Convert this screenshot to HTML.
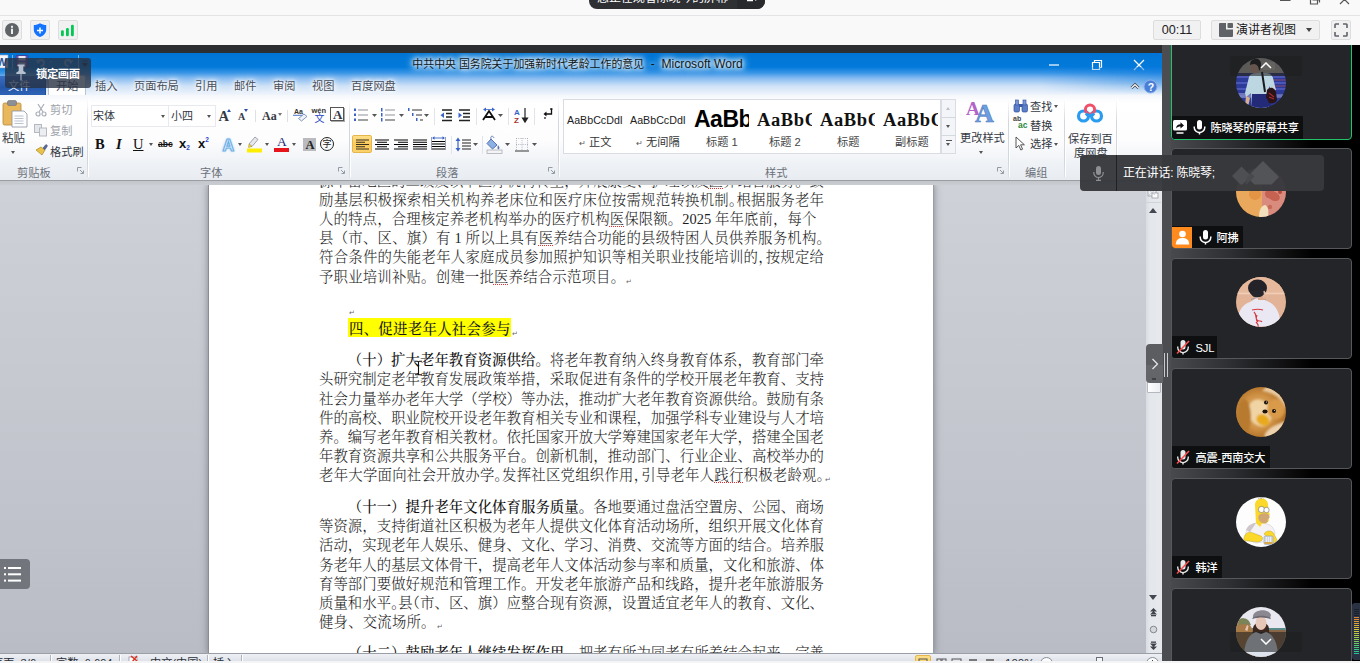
<!DOCTYPE html>
<html lang="zh-CN">
<head>
<meta charset="utf-8">
<title>会议</title>
<style>
*{box-sizing:border-box;margin:0;padding:0}
html,body{width:1360px;height:663px;overflow:hidden;background:#f9f9fa}
body{position:relative;font-family:"Liberation Sans","Noto Sans CJK SC",sans-serif;font-size:12px;color:#222}
.abs{position:absolute}
/* ---------- top meeting chrome ---------- */
#top{position:absolute;left:0;top:0;width:1360px;height:45px;background:#f9f9fa}
#top .sep{position:absolute;left:0;top:15px;width:1360px;height:1px;background:#e4e4e6}
.tbtn{position:absolute;top:20px;height:20px;background:#f1f1f2;border:1px solid #dddddf;border-radius:2px}
#pill{position:absolute;left:589px;top:-14px;width:176px;height:23px;background:#2e3034;border-radius:8px;color:#fff;font-size:12px;line-height:23px;overflow:hidden;white-space:nowrap}
#pill .t{position:absolute;left:8px;top:1px;font-size:12px;letter-spacing:-.1px}
#pill .d{position:absolute;left:148px;top:0;width:28px;height:23px;background:#28292d}
/* ---------- dark band & right panel ---------- */
#band{position:absolute;left:0;top:45px;width:1360px;height:8px;background:#2c2e31}
#right{position:absolute;left:1162px;top:45px;width:198px;height:618px;background:#000}
#gutter{position:absolute;left:0;top:0;width:9px;height:618px;background:#47494d}
.tile{position:absolute;left:9px;width:181px;height:101px;background:#232528;border:1px solid #4a4c50;border-radius:4px;overflow:hidden}
.tile .av{position:absolute;left:65px;top:18px;width:50px;height:50px;border-radius:50%;overflow:hidden}
.tile .lb{position:absolute;left:1px;bottom:0;height:22px;background:#101112;color:#fff;font-size:12px;line-height:22px;white-space:nowrap;padding:0 5px 0 24px}
/* ---------- word window ---------- */
#word{position:absolute;left:0;top:53px;width:1162px;height:610px;overflow:hidden;background:#fff}
#wtitle{position:absolute;left:0;top:0;width:1162px;height:42px;background:linear-gradient(#0074d4 0,#037adb 14px,#3a96e6 20px,#84baf0 25px,#cfe2f7 33px,#f0f5fc 42px)}
#ribbon{position:absolute;left:0;top:42px;width:1162px;height:85px;background:linear-gradient(#f4f7fb 0,#ffffff 8px,#fdfdfe 45px,#eef1f5 70px,#e8ebef 85px)}
#rshadow{position:absolute;left:0;top:127px;width:1162px;height:5px;background:linear-gradient(#8d9097 0,#a9acb3 1px,#c4c7cc 1.5px,#c9ccd1 5px)}
#docarea{position:absolute;left:0;top:132px;width:1146px;height:468px;overflow:hidden;background:linear-gradient(#ced1d7 0,#c6c9d0 40%,#bec1c9 80%,#b9bcc4 100%)}
#page{position:absolute;left:209px;top:0;width:724px;height:468px;background:#fff;box-shadow:-1px 0 0 #8a8d94,1px 0 0 #9a9da5,0 0 7px 1px rgba(80,84,94,.6)}
#vscroll{position:absolute;left:1146px;top:132px;width:16px;height:468px;background:linear-gradient(to right,#d9dce2,#e4e7eb 4px,#e6e8ec)}
#status{position:absolute;left:0;top:600px;width:1162px;height:8px;background:#d5d9e1;border-top:1px solid #a3a7af}
#bottomstrip{position:absolute;left:0;top:660px;width:1360px;height:3px;background:#f4f4f5}

#right{overflow:hidden}
#wtitle .ttl{position:absolute;left:0;top:3px;width:1155px;text-align:center;font-size:12.100px;line-height:16px;color:#101820;text-shadow:0 0 4px #fff,0 0 6px #fff,0 0 8px #e8f2ff,0 0 10px #d8e8ff}
.wc{position:absolute;top:0;color:#fff}
.tab{position:absolute;top:25px;height:17px;line-height:17px;font-size:11.2px;color:#474d59;white-space:nowrap;text-shadow:0 0 3px #fff,0 0 5px #fff,0 0 8px #fff}
#filetab{position:absolute;left:0;top:23px;width:46px;height:19px;background:linear-gradient(#3a6fc4,#2557a8 60%,#2c62b6);border-radius:0 3px 0 0;border-right:1px solid #1d4c96}
#hometab{position:absolute;left:48px;top:22px;width:38px;height:21px;background:linear-gradient(#fbfcfe,#fff);border:1px solid #b9c3d2;border-bottom:none;border-radius:3px 3px 0 0}
#pin{position:absolute;left:5px;top:58px;width:86px;height:30px;background:rgba(40,50,68,.8);border-radius:3px;color:#fff;font-size:11.3px;font-weight:bold;line-height:32px;z-index:20}
#pin span{position:absolute;left:31px;top:0;letter-spacing:-.4px}

/* ribbon */
#ribbon div,#ribbon span{position:absolute;white-space:nowrap}
.rt{font-size:11.2px;line-height:14px;color:#343943}
.rt.g{color:#9ea3ab}
.gl{font-size:11.2px;line-height:14px;color:#6b717b;top:71px}
.gdiv{top:4px;width:1px;height:78px;background:linear-gradient(rgba(190,196,205,0),#d2d6dd 30%,#d2d6dd 80%,rgba(190,196,205,.3));box-shadow:1px 0 0 #fff}
.dl{width:7px;height:7px;top:72px}
.ar{width:0;height:0;border:2.5px solid transparent;border-top:3px solid #555;border-bottom:none}
.cb{top:10px;height:22px;background:#fff;border:1px solid #e7e9ee}
.ico{overflow:visible}

/* document text */
.ln{position:absolute;height:19.15px;line-height:19.15px;margin-top:1.1px;font-family:"Liberation Serif","Noto Serif CJK SC",serif;font-size:14.4px;font-weight:300;color:#1c1c1c;white-space:nowrap;margin-left:-209px}
.ln:not(.j){letter-spacing:.19px}
.ln.j{text-align:justify;text-align-last:justify;white-space:normal}
.ln b{font-weight:500;color:#111}
.hp{display:inline-block;width:.5em;overflow:visible;white-space:nowrap}
.hpl{margin-left:-.5em}
.sq{text-decoration:underline dotted #e33030;text-decoration-thickness:1.100px;text-underline-offset:1.500px;text-decoration-skip-ink:none}
.pm{font-family:"DejaVu Sans",sans-serif;font-size:7px;color:#666;position:relative;top:2px;left:1px}
.hl{background:#ffff00;font-weight:500;letter-spacing:.3px;padding:0 0 0 1.400px;color:#161616;display:inline-block;height:18.600px;line-height:23.4px;position:relative;top:-1.3px;vertical-align:top;overflow:hidden}

#right{background:linear-gradient(to right,#4a4c50 0,#46484c 12px,#2c2e31 70px,#0c0c0d 130px,#000 150px)}
#gutter{background:#4b4d51}
.tile{left:8.500px;width:181.500px;height:101px}
.tile .av{left:64.500px;top:18px}
.tile .av svg{display:block}
.tile .lb{left:0;bottom:0;height:22.500px;padding:0;background:#0e0f10}
.lb .m{position:absolute;top:4px}
.lb .m svg{display:block}
.lb .n{position:absolute;top:0;line-height:25px;font-size:11.200px;font-weight:500;color:#fff;letter-spacing:-.15px}
.chev{position:absolute;left:58px;width:72px;height:19.500px;background:rgba(30,31,33,.58);border-radius:2px}
.chev svg{position:absolute;left:30px;top:6px}
#meter{position:absolute;left:189.500px;top:558px;width:9px;height:57px;background:#2a3142;border-radius:3px 0 0 3px}
#meter i{position:absolute;left:2.500px;top:6px;width:4.500px;height:46px;background:linear-gradient(#1b1f2a 0,#1b1f2a 16%,#e07f30 17%,#e0a030 30%,#d8c838 45%,#98cc48 65%,#40c878 85%,#20c0a0 100%);-webkit-mask-image:repeating-linear-gradient(#000 0,#000 1.300px,transparent 1.300px,transparent 2px);mask-image:repeating-linear-gradient(#000 0,#000 1.300px,transparent 1.300px,transparent 2px)}
#handle{position:absolute;left:1146px;top:344px;width:16.500px;height:39px;background:linear-gradient(#5b5d60 0,#5b5d60 54%,#646669 55%,#626467 100%);border-radius:4px 0 0 4px;z-index:15}
#grip{position:absolute;left:1163.800px;top:353px;width:4px;height:24px;border-left:1px solid #c9cbcf;border-right:1px solid #c9cbcf;z-index:15}
#speak{position:absolute;left:1080px;top:155px;width:244px;height:35.500px;background:rgba(55,57,61,.97);border-radius:4px;z-index:30;color:#fff;font-size:12px}
#speak .dv{position:absolute;left:36px;top:0;width:1px;height:35.500px;background:#202124}
#speak span{position:absolute;left:43px;top:0;line-height:36.500px;white-space:nowrap;letter-spacing:-.2px}

#status{top:599.700px;height:8.300px;overflow:hidden;background:linear-gradient(#eef0f4,#dfe3ea);border-top:1px solid #9a9ea6}
#status .st{position:absolute;top:2.200px;font-size:11.200px;line-height:14px;color:#2a2f38;white-space:nowrap}
#status .sd{position:absolute;top:1px;width:1px;height:8px;background:#b0b4bc;box-shadow:1px 0 0 #fff}
#bottomstrip{top:660.500px;height:2.500px;background:#f4f4f5;z-index:40}
#listbtn{position:absolute;left:0;top:559px;width:30px;height:30px;background:#72757b;border-radius:0 4px 4px 0;z-index:12}
#ibeam{position:absolute;left:413.500px;top:360px;z-index:12}
</style>
</head>
<body>
<div id="top">
  <div class="sep"></div>
  <div id="pill"><span class="t">您正在观看陈晓琴的屏幕</span><span class="d"></span>
    <svg class="abs" style="left:158px;top:9px" width="12" height="8" viewBox="0 0 12 8"><path d="M0 3.500h6M0 5.500h6" stroke="#fff" stroke-width="1.300"/><path d="M6.500 3l2.300 3 2.300-3z" fill="#fff"/></svg>
  </div>
  <svg class="abs" style="left:1276px;top:0" width="80" height="6" viewBox="0 0 80 6"><g stroke="#555" stroke-width="1.200" fill="none"><path d="M4 .4h10.500"/><path d="M34.500 -3v7h7v-7M36.500 0h7v2.500"/><path d="M64 -5l9 9M73 -5l-9 9"/></g></svg>
  <div class="tbtn" style="left:2px;width:20px"></div>
  <div class="tbtn" style="left:30px;width:20px"></div>
  <div class="tbtn" style="left:58px;width:20px"></div>
  <svg class="abs" style="left:2px;top:20px" width="76" height="20" viewBox="0 0 76 20">
    <circle cx="10" cy="10" r="7" fill="#5f6368"/><rect x="9" y="8.700" width="2" height="5.300" fill="#ededee"/><rect x="9" y="5.800" width="2" height="2" fill="#ededee"/>
    <path d="M38 3.200c2 1.300 4 1.700 6.200 1.800v4.500c0 4-3 6.300-6.200 7.500-3.200-1.200-6.200-3.500-6.200-7.500v-4.500c2.200-.1 4.200-.5 6.200-1.800z" fill="#1473ff"/><path d="M35 10.500h6M38 7.500v6" stroke="#fff" stroke-width="1.500"/>
    <g fill="#00c853"><rect x="59" y="10.200" width="2.800" height="6" rx="1.200"/><rect x="64" y="8" width="2.800" height="8.200" rx="1.200"/><rect x="69" y="4.800" width="2.800" height="11.400" rx="1.200"/></g>
  </svg>
  <div class="tbtn" style="left:1153px;width:48px"></div>
  <div class="abs" style="left:1153px;top:20px;width:48px;height:20px;line-height:21px;text-align:center;font-size:12.600px;color:#222">00:11</div>
  <div class="tbtn" style="left:1211px;width:109px"></div>
  <svg class="abs" style="left:1219px;top:23px" width="14" height="14" viewBox="0 0 14 14"><path d="M0 1a1 1 0 0 1 1-1h6v6.500h7v6.500a1 1 0 0 1-1 1h-12a1 1 0 0 1-1-1z" fill="#5f6368"/><rect x="8.500" y="0" width="5.500" height="5" rx=".8" fill="#5f6368"/></svg>
  <div class="abs" style="left:1236px;top:20px;height:20px;line-height:20px;font-size:12px;color:#1c1c1c;white-space:nowrap">演讲者视图</div>
  <div class="abs" style="left:1305.500px;top:28px;width:0;height:0;border:3.500px solid transparent;border-top:4.500px solid #444;border-bottom:none"></div>
  <div class="tbtn" style="left:1331px;width:20px"></div>
  <svg class="abs" style="left:1334px;top:23px" width="14" height="14" viewBox="0 0 14 14"><path d="M1 5v-3.200a.8 .8 0 0 1 .8-.8h3.200M9 1h3.200a.8 .8 0 0 1 .8 .8v3.200M13 9v3.200a.8 .8 0 0 1-.8 .8h-3.200M5 13h-3.200a.8 .8 0 0 1-.8-.8v-3.200" stroke="#5f6368" stroke-width="1.600" fill="none"/></svg>
</div>
<div id="band"></div>
<div id="pin"><svg class="abs" style="left:10px;top:5px" width="12" height="20" viewBox="0 0 12 20"><path d="M2.500 1.500h7v1.800h-1.200v4.700l2.400 1.600v1.400h-9.400v-1.400l2.400-1.600v-4.700h-1.200z" fill="#b4bfd0"/><path d="M6 11v6.500" stroke="#a4b0c2" stroke-width="1.100"/></svg><span>锁定画面</span></div>

<div id="word">
  <div id="wtitle">
    <svg class="abs" style="left:0;top:1px" width="92" height="18" viewBox="0 0 92 18">
      <rect x="-2" y="1" width="10" height="13" fill="#f4f6fa" stroke="#8aa0c8" stroke-width=".6"/><text x="-3.500" y="11.500" font-family="Liberation Sans,sans-serif" font-weight="bold" font-size="11" fill="#2a5699">W</text>
      <path d="M12.500 1v14" stroke="#9cc0ec" stroke-width=".8"/>
      <rect x="16" y="1.500" width="12" height="12" rx="1" fill="#6a58b8" stroke="#3f3486" stroke-width=".7"/><rect x="18.500" y="2" width="7" height="4.500" fill="#e8e8f4"/><rect x="18.500" y="8.500" width="7" height="5" fill="#cfd0e4"/>
      <path d="M38 9c0-4 6-4 6 0 0 2-2 3-3.500 3.500" stroke="#7aa4dc" stroke-width="1.800" fill="none"/><path d="M35.500 6l2.500 4 2.500-3z" fill="#7aa4dc"/>
      <path d="M50 8h2" stroke="#7aa4dc" stroke-width="1"/>
      <path d="M71 9c0-4-6-4-6 0 0 2 2 3 3.500 3.500" stroke="#7aa4dc" stroke-width="1.800" fill="none"/><path d="M73.500 6l-2.500 4-2.500-3z" fill="#7aa4dc"/>
      <path d="M78.500 1v14" stroke="#9cc0ec" stroke-width=".8"/>
      <path d="M82.500 7h5M82.500 9.500h5l-2.500 3z" stroke="#223" stroke-width=".9" fill="#223"/>
    </svg>
    <div class="ttl"><span style="font-size:10.900px">中共中央 国务院关于加强新时代老龄工作的意见</span>&nbsp; - &nbsp;Microsoft Word</div>
    <svg class="wc" style="left:1040px;top:2px" width="116" height="20" viewBox="0 0 116 20"><g stroke="#fff" stroke-width="1.2" fill="none"><path d="M9 10h10"/><path d="M52.5 7.5h7v7h-7zM54.5 7.5v-2h7v7h-2"/><path d="M94 5l10 10M104 5l-10 10"/></g></svg>
    <div class="abs" style="left:1040px;top:14px;width:122px;height:28px;background:linear-gradient(to right,rgba(10,120,220,0),rgba(10,120,220,.5) 80%,rgba(10,120,220,.6));-webkit-mask-image:linear-gradient(#000,rgba(0,0,0,.6) 60%,transparent);mask-image:linear-gradient(#000,rgba(0,0,0,.6) 60%,transparent)"></div>
    <svg class="abs" style="left:1128px;top:26px" width="32" height="15" viewBox="0 0 32 15"><path d="M3.500 9l3.500-3.500 3.500 3.500" stroke="#3a3f48" stroke-width="2.600" fill="none"/><path d="M3.500 9l3.500-3.500 3.500 3.500" stroke="#fff" stroke-width="1.200" fill="none"/><circle cx="22.500" cy="7.500" r="6.500" fill="#4a7fd8" stroke="#8ab0ec" stroke-width="1"/><text x="19.700" y="11.500" font-family="Liberation Sans,sans-serif" font-weight="bold" font-size="10.500" fill="#fff">?</text></svg>
    <div id="filetab"></div><div id="hometab"></div>
    <div class="tab" style="left:8px;color:#fff;text-shadow:none">文件</div>
    <div class="tab" style="left:56px">开始</div>
    <div class="tab" style="left:95px">插入</div>
    <div class="tab" style="left:134px">页面布局</div>
    <div class="tab" style="left:195px">引用</div>
    <div class="tab" style="left:234px">邮件</div>
    <div class="tab" style="left:273px">审阅</div>
    <div class="tab" style="left:312px">视图</div>
    <div class="tab" style="left:351px">百度网盘</div>
  </div>
  <div id="ribbon">
    <!-- clipboard -->
    <svg class="ico abs" style="left:2px;top:4px" width="27" height="30" viewBox="0 0 27 30"><rect x="1" y="4" width="18" height="22" rx="1.5" fill="#e9b85c" stroke="#b8893a" stroke-width=".8"/><rect x="5.5" y="1.5" width="9" height="5" rx="1.5" fill="#8c8f96" stroke="#6d7077" stroke-width=".6"/><path d="M10 12h12l3 3v13h-15z" fill="#fdfdfe" stroke="#8a93a3" stroke-width=".8"/><path d="M12.5 17h9M12.5 19.5h9M12.5 22h9M12.5 24.500h9" stroke="#a9b4c6" stroke-width=".8"/></svg>
    <div class="rt" style="left:2px;top:36px;font-size:11.5px">粘贴</div>
    <div class="ar" style="left:11px;top:56px"></div>
    <svg class="ico abs" style="left:35px;top:8px" width="12" height="14" viewBox="0 0 12 14"><path d="M3 1l5 8M9 1l-5 8" stroke="#a9aeb6" stroke-width="1.2" fill="none"/><circle cx="3" cy="11" r="2" fill="none" stroke="#a9aeb6" stroke-width="1.2"/><circle cx="9" cy="11" r="2" fill="none" stroke="#a9aeb6" stroke-width="1.2"/></svg>
    <div class="rt g" style="left:50px;top:8px">剪切</div>
    <svg class="ico abs" style="left:34px;top:29px" width="14" height="13" viewBox="0 0 14 13"><rect x=".5" y=".5" width="7" height="8" fill="#e4e6ea" stroke="#b4b8c0"/><rect x="5.500" y="4" width="7" height="8" fill="#eceef1" stroke="#b4b8c0"/></svg>
    <div class="rt g" style="left:50px;top:29px">复制</div>
    <svg class="ico abs" style="left:35px;top:49px" width="14" height="13" viewBox="0 0 14 13"><path d="M1 6l6 5 3-5-4-3z" fill="#e9c24a" stroke="#a88a2a" stroke-width=".7"/><path d="M8 4l3-3.500 1.500 1.200-2.500 4z" fill="#5a6a9a" stroke="#3d4a78" stroke-width=".6"/></svg>
    <div class="rt" style="left:50px;top:50px">格式刷</div>
    <div class="gl" style="left:17px">剪贴板</div>
    <svg class="dl abs" style="left:77px" viewBox="0 0 7 7"><path d="M.5 4.500v-4h4M3 3l3 3M6.500 3.500v3h-3" stroke="#8b919b" fill="none" stroke-width=".9"/></svg>
    <div class="gdiv" style="left:87px"></div>
    <!-- font -->
    <div class="cb" style="left:91px;width:78px"></div>
    <div class="cb" style="left:168px;width:48px"></div>
    <div class="rt" style="left:93px;top:14px;font-size:11px">宋体</div>
    <div class="ar" style="left:161px;top:20px"></div>
    <div class="rt" style="left:171px;top:14px;font-size:11px">小四</div>
    <div class="ar" style="left:207px;top:20px"></div>
    <div class="rt" style="left:218.500px;top:12px;font:bold 14.500px/18px 'Liberation Serif',serif">A</div>
    <div class="ar" style="left:227px;top:14px;border-top:none;border-bottom:3px solid #2b4fa8"></div>
    <div class="rt" style="left:238px;top:14px;font:bold 10px/15px 'Liberation Serif',serif">A</div>
    <div class="ar" style="left:244px;top:14px;border-top-color:#2b4fa8"></div>
    <div class="abs" style="left:255px;top:15px;width:1px;height:12px;background:#dde0e6"></div>
    <div class="rt" style="left:262px;top:11.500px;font:bold 12px/18px 'Liberation Serif',serif">Aa</div>
    <div class="ar" style="left:278px;top:18px;border-top-color:#777"></div>
    <div class="abs" style="left:287px;top:15px;width:1px;height:12px;background:#dde0e6"></div>
    <svg class="ico abs" style="left:292px;top:12px" width="17" height="17" viewBox="0 0 17 17"><text x="2" y="6.500" font-family="Liberation Sans,sans-serif" font-size="7" font-weight="bold" fill="#333">Aa</text><path d="M1 8.300h10" stroke="#3a62c8" stroke-width=".9"/><path d="M6.500 11.500l5.500-4.500 3 2.500-5.500 4.500z" fill="#eef2fa" stroke="#7c8cb0" stroke-width=".9"/></svg>
    <div class="rt" style="left:311.500px;top:11px;font:bold 7.500px/9px 'Liberation Sans',sans-serif;color:#333">wén</div>
    <div class="rt" style="left:314.500px;top:16.500px;font-size:10px;line-height:14px;color:#2a48c8">文</div>
    <div class="abs" style="left:330px;top:12px;width:14px;height:13.500px;border:1px solid #555;background:#fff;box-shadow:1px 1px 0 #aaa"></div>
    <div class="rt" style="left:333px;top:10.500px;font:bold 13px/17px 'Liberation Serif',serif">A</div>
    <!-- row 2 -->
    <div class="rt" style="left:95px;top:40px;font:bold 14.5px/18px 'Liberation Serif',serif;color:#111">B</div>
    <div class="rt" style="left:116px;top:40px;font:italic bold 14.5px/18px 'Liberation Serif',serif;color:#111">I</div>
    <div class="rt" style="left:133px;top:40px;font:14.5px/18px 'Liberation Serif',serif;color:#111;text-decoration:underline">U</div>
    <div class="ar" style="left:149px;top:48px"></div>
    <div class="rt" style="left:158px;top:42px;font:bold 8.500px/14px 'Liberation Sans',sans-serif;color:#111;text-decoration:line-through">abc</div>
    <div class="rt" style="left:179px;top:41px;font:bold 13px/16px 'Liberation Sans',sans-serif;color:#111">x<span style="position:relative;top:2px;font-size:6.500px;color:#2a48c8;line-height:1px">2</span></div>
    <div class="rt" style="left:198px;top:41px;font:bold 13px/16px 'Liberation Sans',sans-serif;color:#111">x<span style="position:relative;top:-6px;font-size:6.500px;color:#2a48c8;line-height:1px">2</span></div>
    
    <div class="rt" style="left:222.500px;top:40px;font:bold 16px/22px 'Liberation Sans',sans-serif;color:#eaf4ff;-webkit-text-stroke:1.2px #6fb0e6;text-shadow:0 0 3px #8cc4f0">A</div>
    <div class="ar" style="left:238px;top:48px"></div>
    <svg class="ico abs" style="left:246px;top:41px" width="17" height="17" viewBox="0 0 17 17"><path d="M3 8l6-7 3 2.500-6 7z" fill="#e6e8ec" stroke="#8a8f9a" stroke-width=".8"/><path d="M3 8l3 2.500-3.500 1z" fill="#f2d24a" stroke="#a8902a" stroke-width=".5"/><rect x="1" y="12.500" width="15" height="4" fill="#ffee00"/></svg>
    <div class="ar" style="left:265px;top:48px"></div>
    <div class="rt" style="left:277px;top:38.300px;font:13.500px/17px 'Liberation Serif',serif;color:#1a2a78">A</div>
    <div class="abs" style="left:274px;top:53px;width:15px;height:4px;background:#e8141c"></div>
    <div class="ar" style="left:292px;top:48px"></div>
    <div class="abs" style="left:303px;top:43px;width:13px;height:13px;background:#b9bbbf"></div>
    <div class="rt" style="left:305.500px;top:42px;font:bold 12.500px/16px 'Liberation Serif',serif;color:#222">A</div>
    <div class="abs" style="left:320px;top:42px;width:14px;height:14px;border:1.2px solid #222;border-radius:50%"></div>
    <div class="rt" style="left:322.500px;top:43px;font-size:9px;line-height:12px;color:#222">字</div>
    <div class="gl" style="left:200px">字体</div>
    <svg class="dl abs" style="left:338px" viewBox="0 0 7 7"><path d="M.5 4.500v-4h4M3 3l3 3M6.500 3.500v3h-3" stroke="#8b919b" fill="none" stroke-width=".9"/></svg>
    <div class="gdiv" style="left:349px"></div>
    <!-- paragraph row1 -->
    <svg class="ico abs" style="left:354px;top:12px" width="200" height="20" viewBox="0 0 200 20">
      <g fill="#3a62c8"><rect x="0" y="1.500" width="2" height="2.500"/><rect x="0" y="6.500" width="2" height="2.500"/><rect x="0" y="11.500" width="2" height="2.500"/></g>
      <g stroke="#8d9199" stroke-width="1"><path d="M4 3h10M4 8h10"/></g><path d="M4 13h10" stroke="#444" stroke-width="1"/>
      <path d="M18 7h5l-2.500 3z" fill="#555"/>
      <g fill="#3a62c8"><rect x="27" y="1" width="1.500" height="3.500"/><rect x="27" y="6" width="1.500" height="3.500"/><rect x="27" y="11" width="1.500" height="3.500"/></g>
      <g stroke="#8d9199" stroke-width="1"><path d="M31 3h10M31 8h10"/></g><path d="M31 13h10" stroke="#444" stroke-width="1"/>
      <path d="M45 7h5l-2.500 3z" fill="#555"/>
      <g fill="#3a62c8"><rect x="54" y="1" width="1.500" height="3"/><rect x="58" y="6" width="1.500" height="3"/><rect x="62" y="11" width="1.500" height="3"/></g>
      <g stroke="#333" stroke-width="1"><path d="M58 3h10M62 8h6M66 13h3"/></g>
      <path d="M70 7h5l-2.500 3z" fill="#555"/>
      <path d="M80.500 1v17" stroke="#e1e4ea"/>
      <g stroke="#222" stroke-width="1.300"><path d="M88 3h10M92 6.500h6M92 10h6M88 13.500h10"/></g><path d="M86.500 8.200l3.500-2.700v5.400z" fill="#3a62c8"/>
      <g stroke="#222" stroke-width="1.300"><path d="M105 3h11M109 6.500h7M109 10h7M105 13.500h11"/></g><path d="M108 8.200l-3.500-2.700v5.400z" fill="#3a62c8"/>
      <path d="M122.500 1v17" stroke="#e1e4ea"/>
      <path d="M129 13l6-9 6 9M131.500 10h7" stroke="#111" stroke-width="1.800" fill="none"/><path d="M129 2.500l3-2v4zM141 2.500l-3-2v4z" fill="#3a62c8"/><path d="M132 2.500h6" stroke="#3a62c8" stroke-width=".8"/>
      <path d="M144 7h5l-2.500 3z" fill="#555"/>
      <path d="M154.500 1v17" stroke="#e1e4ea"/>
      <text x="160" y="7.500" font-family="Liberation Sans,sans-serif" font-weight="bold" font-size="8" fill="#3a62c8">A</text>
      <text x="160" y="15.500" font-family="Liberation Sans,sans-serif" font-weight="bold" font-size="8" fill="#a83232">Z</text>
      <path d="M171 1v12M168.500 11l2.500 4 2.500-4z" stroke="#222" stroke-width="1.200" fill="#222"/>
      <path d="M180.500 1v17" stroke="#e1e4ea"/>
      <path d="M197.500 1.500v5.500h-6.500" stroke="#111" stroke-width="1.300" fill="none"/><path d="M192.500 4.500l-3 2.500 3 2.500z" fill="#111"/><path d="M198.500 2h-2.500" stroke="#111" stroke-width="1.200"/><path d="M191 10v2" stroke="#111" stroke-width="1.200"/>
    </svg>
    <!-- paragraph row2 -->
    <div class="abs" style="left:352px;top:39.500px;width:19.500px;height:18.500px;border:1px solid #e5b64c;border-radius:2px;background:linear-gradient(#fde08a,#fbc95a 50%,#fbd26c)"></div>
    <svg class="ico abs" style="left:354px;top:41px" width="190" height="18" viewBox="0 0 190 18">
      <g stroke="#000" stroke-width="1.150"><path d="M2 4h13M2 6.250h9M2 8.500h13M2 10.750h9M2 13h13" stroke="#3a3020"/>
      <path d="M21 4h14M23 6.250h10M21 8.500h14M23 10.750h10M21 13h14"/>
      <path d="M40 4h14M44 6.250h10M40 8.500h14M44 10.750h10M40 13h14"/>
      <path d="M59 4h14M59 6.250h14M59 8.500h14M59 10.750h14M59 13h14"/>
      <path d="M78 5.500h13M78 8h13M78 10.500h13M78 13h13"/></g>
      <path d="M77.500 1v13M91.500 1v13" stroke="#8a94a8" stroke-width=".9"/><path d="M79 2h11" stroke="#3a62c8" stroke-width=".9"/><path d="M78 2l2.500-1.700v3.400zM91 2l-2.500-1.700v3.400z" fill="#3a62c8"/>
      <path d="M97.500 0v18" stroke="#e1e4ea"/>
      <path d="M104 4v9" stroke="#3a62c8" stroke-width="1.200"/><path d="M104 1.500l-2.500 3.500h5zM104 15.500l-2.500-3.500h5z" fill="#3a62c8"/>
      <g stroke="#222" stroke-width="1.100"><path d="M108 4h9M108 7h9M108 10h9M108 13h9"/></g>
      <path d="M119 7h5l-2.500 3z" fill="#555"/>
      <path d="M128.500 0v18" stroke="#e1e4ea"/>
      <path d="M137 3l6 6-4.500 4-5.500-5.500z" fill="#8ab0e4" stroke="#4868a8" stroke-width=".9"/><path d="M137 3c-1-3 2-4 3-1" stroke="#5878b0" fill="none" stroke-width=".9"/><path d="M144 9c1.500 2 2 3.500 .8 4.200-1 .5-2-.5-.8-4.200z" fill="#5878b0"/>
      <rect x="133" y="14" width="15" height="3.500" fill="#f4f4f6" stroke="#a0a4ac" stroke-width=".7"/>
      <path d="M151 7h5l-2.500 3z" fill="#555"/>
      <g stroke="#a0a6b0" stroke-width=".8" stroke-dasharray="1 1.200"><path d="M162 2.500h12M162 8.500h12M162.500 2v12M168 2v12M173.500 2v12"/></g><path d="M161 15h14" stroke="#555" stroke-width="1.200"/>
      <path d="M178 7h5l-2.500 3z" fill="#555"/>
    </svg>
    <div class="gl" style="left:436px">段落</div>
    <svg class="dl abs" style="left:548px" viewBox="0 0 7 7"><path d="M.5 4.500v-4h4M3 3l3 3M6.500 3.500v3h-3" stroke="#8b919b" fill="none" stroke-width=".9"/></svg>
    <div class="gdiv" style="left:558px"></div>
    <!-- styles -->
    <div class="abs" style="left:563px;top:4px;width:378px;height:55px;background:#fff;border:1px solid #d9dce2"></div>
    <div class="rt" style="left:567px;top:17.800px;font-size:10.700px;color:#222">AaBbCcDdI</div>
    <div class="rt" style="left:579px;top:40px;color:#333"><span style="position:static;font-size:8px;color:#555">↵</span> 正文</div>
    <div class="rt" style="left:630px;top:17.800px;font-size:10.700px;color:#222">AaBbCcDdI</div>
    <div class="rt" style="left:636px;top:40px;color:#333"><span style="position:static;font-size:8px;color:#555">↵</span> 无间隔</div>
    <div class="rt" style="left:694px;top:9.500px;font:bold 23px/28px 'Liberation Sans',sans-serif;color:#000;width:55px;overflow:hidden;letter-spacing:-.5px">AaBb</div>
    <div class="rt" style="left:706px;top:40px;color:#444">标题 1</div>
    <div class="rt" style="left:757px;top:13px;font:bold 18.500px/24px 'Liberation Serif',serif;color:#111;width:55px;overflow:hidden;letter-spacing:.6px">AaBbC</div>
    <div class="rt" style="left:769px;top:40px;color:#444">标题 2</div>
    <div class="rt" style="left:820px;top:13px;font:bold 18.500px/24px 'Liberation Serif',serif;color:#111;width:55px;overflow:hidden;letter-spacing:.6px">AaBbC</div>
    <div class="rt" style="left:837px;top:40px;color:#444">标题</div>
    <div class="rt" style="left:883px;top:13px;font:bold 18.500px/24px 'Liberation Serif',serif;color:#111;width:55px;overflow:hidden;letter-spacing:.6px">AaBbC</div>
    <div class="rt" style="left:895px;top:40px;color:#444">副标题</div>
    <div class="abs" style="left:941px;top:4px;width:15px;height:55px;background:#f3f5f8;border:1px solid #d9dce2"></div>
    <div class="abs" style="left:941px;top:22px;width:15px;height:1px;background:#d4d8df"></div>
    <div class="abs" style="left:941px;top:40px;width:15px;height:1px;background:#d4d8df"></div>
    <div class="ar" style="left:946px;top:12px;border-top:none;border-bottom:3px solid #b9bec8"></div>
    <div class="ar" style="left:946px;top:30px"></div>
    <div class="abs" style="left:945.500px;top:45px;width:6px;height:1px;background:#555"></div>
    <div class="ar" style="left:946px;top:48px"></div>
    <div class="rt" style="left:966px;top:3px;font:bold 19px/22px 'Liberation Serif',serif;color:#b264c8">A</div>
    <div class="rt" style="left:975px;top:5px;font:bold 26px/28px 'Liberation Serif',serif;color:#6f9fe0;-webkit-text-stroke:.6px #4a78c0">A</div>
    <div class="rt" style="left:960px;top:36.400px">更改样式</div>
    <div class="ar" style="left:979px;top:56px"></div>
    <div class="gl" style="left:765px">样式</div>
    <svg class="dl abs" style="left:997px" viewBox="0 0 7 7"><path d="M.5 4.500v-4h4M3 3l3 3M6.500 3.500v3h-3" stroke="#8b919b" fill="none" stroke-width=".9"/></svg>
    <div class="gdiv" style="left:1008px"></div>
    <!-- editing -->
    <svg class="ico abs" style="left:1013px;top:4px" width="16" height="14" viewBox="0 0 16 14"><rect x="1" y="5" width="5.500" height="8" rx="1.500" fill="#5a7ec8" stroke="#2f4f98" stroke-width=".7"/><rect x="9" y="5" width="5.500" height="8" rx="1.500" fill="#5a7ec8" stroke="#2f4f98" stroke-width=".7"/><rect x="2.500" y="1" width="3" height="5" fill="#7a98d8" stroke="#2f4f98" stroke-width=".6"/><rect x="10" y="1" width="3" height="5" fill="#7a98d8" stroke="#2f4f98" stroke-width=".6"/><rect x="6" y="5" width="3.500" height="3" fill="#3a5aa8"/></svg>
    <div class="rt" style="left:1030px;top:5px">查找</div>
    <div class="ar" style="left:1054px;top:10px"></div>
    <div class="rt" style="left:1013px;top:20px;font:bold 7px/8px 'Liberation Sans',sans-serif;color:#444">ab</div>
    <div class="rt" style="left:1018px;top:26px;font:bold 8.500px/9px 'Liberation Sans',sans-serif;color:#2c8a3c">ac</div>
    <div class="rt" style="left:1030px;top:23.700px">替换</div>
    <svg class="ico abs" style="left:1015px;top:41px" width="10" height="15" viewBox="0 0 10 15"><path d="M1 1v11l2.800-2.600 2 4.600 1.800-.8-2-4.400h3.800z" fill="#fff" stroke="#444" stroke-width=".9"/></svg>
    <div class="rt" style="left:1030px;top:42px">选择</div>
    <div class="ar" style="left:1054px;top:48px"></div>
    <div class="gl" style="left:1025px">编组</div>
    <div class="gdiv" style="left:1064px"></div>
    <!-- baidu -->
    <svg class="ico abs" style="left:1076px;top:6px" width="28" height="24" viewBox="0 0 28 24"><circle cx="7.500" cy="15" r="5" fill="none" stroke="#2a9cf0" stroke-width="3.200"/><circle cx="20.500" cy="15" r="5" fill="none" stroke="#2a9cf0" stroke-width="3.200"/><circle cx="14" cy="8.500" r="4.600" fill="none" stroke="#f0506a" stroke-width="3"/><path d="M10 12.500a5 5 0 0 0 8 0" stroke="#2a9cf0" stroke-width="3.200" fill="none"/></svg>
    <div class="rt" style="left:1068px;top:36.700px">保存到百</div>
    <div class="rt" style="left:1074px;top:51px">度网盘</div>
    <div class="gdiv" style="left:1116px"></div>
</div>
  <div id="rshadow"></div>
  <div id="docarea">
    <div id="page">
<!--DOC-->
      <div class="ln j" style="left:319px;top:-14.22px;width:505px">源丰富地区的二级及以下医疗机构转型，开展康复、护理以及<span class="sq">医</span>养结合服务。鼓</div>
      <div class="ln j" style="left:319px;top:4.93px;width:505px">励基层积极探索相关机构养老床位和医疗床位按需规范转换机制<span class="hp">。</span>根据服务老年</div>
      <div class="ln j" style="left:319px;top:24.08px;width:497.5px">人的特点，合理核定养老机构举办的医疗机构<span class="sq">医</span>保限额。2025 年年底前，每个</div>
      <div class="ln j" style="left:319px;top:43.23px;width:512px">县（市、区、旗）有 1 所以上具有<span class="sq">医</span>养结合功能的县级特困人员供养服务机构。</div>
      <div class="ln j" style="left:319px;top:62.38px;width:505px">符合条件的失能老年人家庭成员参加照护知识等相关职业技能培训的<span class="hp">，</span>按规定给</div>
      <div class="ln" style="left:319px;top:81.53px;width:505px">予职业培训补贴。创建一批<span class="sq">医</span>养结合示范项目。<span class="pm">↵</span></div>
      <div class="ln" style="left:347.8px;top:112.93px"><span class="pm">↵</span></div>
      <div class="ln" style="left:347.6px;top:133.43px"><span class="hl">四、促进老年人社会参与</span><span class="pm">↵</span></div>
      <div class="ln j" style="left:347.8px;top:165.23px;width:476.2px"><b>（十）扩大老年教育资源供给。</b>将老年教育纳入终身教育体系，教育部门牵</div>
      <div class="ln j" style="left:319px;top:184.38px;width:505px">头研究制定老年教育发展政策举措，采取促进有条件的学校开展老年教育、支持</div>
      <div class="ln j" style="left:319px;top:203.53px;width:505px">社会力量举办老年大学（学校）等办法，推动扩大老年教育资源供给。鼓励有条</div>
      <div class="ln j" style="left:319px;top:222.68px;width:505px">件的高校、职业院校开设老年教育相关专业和课程，加强学科专业建设与人才培</div>
      <div class="ln j" style="left:319px;top:241.82px;width:505px">养。编写老年教育相关教材。依托国家开放大学筹建国家老年大学，搭建全国老</div>
      <div class="ln j" style="left:319px;top:260.98px;width:505px">年教育资源共享和公共服务平台。创新机制，推动部门、行业企业、高校举办的</div>
      <div class="ln j" style="left:319px;top:280.12px;width:511px">老年大学面向社会开放办学<span class="hp">。</span>发挥社区党组织作用<span class="hp">，</span>引导老年人<span class="sq">践行</span>积极老龄观<span class="hp">。</span><span class="pm">↵</span></div>
      <div class="ln j" style="left:347.8px;top:312.03px;width:476.2px"><b>（十一）提升老年文化体育服务质量。</b>各地要通过盘活空置房、公园、商场</div>
      <div class="ln j" style="left:319px;top:331.17px;width:505px">等资源，支持街道社区积极为老年人提供文化体育活动场所，组织开展文化体育</div>
      <div class="ln j" style="left:319px;top:350.32px;width:505px">活动，实现老年人娱乐、健身、文化、学习、消费、交流等方面的结合。培养服</div>
      <div class="ln j" style="left:319px;top:369.48px;width:505px">务老年人的基层文体骨干，提高老年人文体活动参与率和质量，文化和旅游、体</div>
      <div class="ln j" style="left:319px;top:388.62px;width:505px">育等部门要做好规范和管理工作。开发老年旅游产品和线路，提升老年旅游服务</div>
      <div class="ln j" style="left:319px;top:407.77px;width:505px">质量和水平<span class="hp">。</span>县<span class="hpl">（</span>市、区、旗）应整合现有资源，设置适宜老年人的教育、文化、</div>
      <div class="ln" style="left:319px;top:426.92px;width:505px">健身、交流场所。<span class="pm">↵</span></div>
      <div class="ln j" style="left:347.8px;top:458.02px;width:476.2px"><b>（十二）鼓励老年人继续发挥作用。</b>把老有所为同老有所养结合起来，完善</div>
<!--/DOC-->
    </div>
  </div>
  <div id="vscroll">
    <svg class="abs" style="left:1px;top:2px" width="13" height="13" viewBox="0 0 13 13"><rect x="1" y="2" width="8" height="7" fill="#f2f3f5" stroke="#9a9ea6" stroke-width=".8"/><rect x="5" y="6" width="6" height="5" fill="#fbfbfc" stroke="#9a9ea6" stroke-width=".8"/><path d="M2 3l6 5M8 3l-6 5" stroke="#b0b4bb" stroke-width=".6"/></svg>
    <div class="abs" style="left:0;top:17px;width:15px;height:1px;background:#d0d3d9"></div>
    <div class="abs" style="left:3px;top:23px;width:0;height:0;border:4.500px solid transparent;border-bottom:5px solid #454850;border-top:none"></div>
    <div class="abs" style="left:1px;top:173px;width:14px;height:34.500px;background:linear-gradient(to right,#fff,#eceef2);border:1px solid #b4b8c0;border-radius:1px"></div>
    <div class="abs" style="left:3px;top:410px;width:0;height:0;border:4.500px solid transparent;border-top:5px solid #454850;border-bottom:none"></div>
    <svg class="abs" style="left:3px;top:422.500px" width="9" height="42" viewBox="0 0 9 42"><g fill="#3f424a"><path d="M4.500 0l3.500 3.500h-7zM4.500 3l3.500 3.500h-7z"/><rect x="2" y="7" width="5" height="1.300"/><path d="M4.500 42l3.500-3.500h-7zM4.500 39l3.500-3.500h-7z"/><rect x="2" y="33.500" width="5" height="1.300"/></g><circle cx="4.500" cy="21.500" r="3.300" fill="#d5d7dc" stroke="#7b7f87" stroke-width=".9"/></svg>
  </div>
  <div id="status">
    <div class="st" style="left:-8px">页面: 3/6</div><div class="sd" style="left:50px"></div>
    <div class="st" style="left:56px">字数: 6,694</div><div class="sd" style="left:119px"></div>
    <svg class="abs" style="left:128px;top:1px" width="12" height="10" viewBox="0 0 12 10"><rect x="1" y="2" width="8" height="8" fill="#fff" stroke="#889" stroke-width=".7"/><path d="M3 1l6 5M9 1l-5 6" stroke="#e03020" stroke-width="1.400"/></svg>
    <div class="st" style="left:150px">中文(中国)</div><div class="sd" style="left:207px"></div>
    <div class="st" style="left:213px">插入</div><div class="sd" style="left:241px"></div>
    <div class="abs" style="left:915px;top:1px;width:16px;height:12px;background:linear-gradient(#fde08a,#fbc95a);border:1px solid #e5b64c;border-radius:2px"></div>
    <svg class="abs" style="left:915px;top:3px" width="82" height="8" viewBox="0 0 82 8"><g fill="none" stroke="#555" stroke-width="1"><rect x="4" y="2" width="8" height="8"/><rect x="22" y="2" width="4" height="8"/><rect x="27" y="2" width="4" height="8"/><rect x="37" y="2" width="9" height="8"/><path d="M54 3h8M54 6h8M71 3h8M71 6h8" stroke-width="1.300"/></g></svg>
    <div class="st" style="left:1005px;font-size:11.500px">100%</div>
    <div class="abs" style="left:1040px;top:3px;width:13px;height:13px;border-radius:50%;background:#fbfcfd;border:1px solid #8a8e96"></div>
    <div class="abs" style="left:1054px;top:8px;width:92px;height:1px;background:#8a8e96"></div>
    <div class="abs" style="left:1096px;top:3px;width:7px;height:10px;background:#f4f5f7;border:1px solid #6a6e76"></div>
    <div class="abs" style="left:1146px;top:3px;width:13px;height:13px;border-radius:50%;background:#fbfcfd;border:1px solid #8a8e96"></div>
    <div class="abs" style="left:1152px;top:6px;width:1px;height:3px;background:#444"></div>
  </div>
</div>

<div id="right">
  <div id="gutter"></div>
  <div class="tile" style="top:-6.5px;border-color:#1fc46b"><div class="av"><svg width="50" height="50" viewBox="0 0 50 50"><rect width="50" height="50" fill="#2c3a9a"/><rect width="50" height="15" fill="#b4ada0"/><rect x="27" y="4" width="12" height="8" fill="#c8c2b6"/><rect y="15" width="50" height="3" fill="#3a3f7a"/><path d="M0 19h50M0 25h50M0 31h50M0 38h50" stroke="#5560c0" stroke-width="1.500"/><path d="M30 22h20M32 28h18" stroke="#8a4a6a" stroke-width="1"/><rect x="0" y="35" width="16" height="5" fill="#8a90c8" opacity=".7"/><rect x="38" y="36" width="10" height="4" fill="#8088c0" opacity=".6"/><path d="M15 50v-15l-5 4-1-4 4-16c1-3 4-4 7-4h10c4 0 6 2 7 5l3 12-4 2-3-6v27z" fill="#bcd6e2"/><path d="M16 36h18l1 14h-20z" fill="#232a78"/><path d="M10 38l-1 10 3 1 2-9zM36 28l3 7-6 8-1-3z" fill="#d8b090"/><ellipse cx="19" cy="9" rx="5" ry="6.500" fill="#caa088"/><path d="M14 7c0-8 11-8 11-1 0 3-1 6-2 7 0-4-2-7-5-7-2 0-3 1-4 1z" fill="#1e1c1e"/><path d="M26 14l3 20" stroke="#1a1a1c" stroke-width="2"/><path d="M31 32c3-4 8-2 9 2l1 8c-1 3-5 4-8 3l-3-6z" fill="#2a1418"/><path d="M33 35l5 4M33 39l5 2" stroke="#a82a30" stroke-width="1.200"/></svg></div><div class="chev" style="top:16.500px"><svg width="12" height="7" viewBox="0 0 12 7"><path d="M1 6l5-5 5 5" stroke="#fff" stroke-width="1.500" fill="none"/></svg></div><div class="lb" style="width:131px"><svg class="abs" style="left:1px;top:4px" width="14" height="14" viewBox="0 0 14 14"><rect x="0" y="0" width="14" height="10.500" rx="1.500" fill="#fff"/><path d="M3 8.500c.3-3 2-4.300 4.500-4.300v-2l3.500 3.200-3.500 3.200v-2c-1.800 0-3.200.5-4.500 1.900z" fill="#111"/><path d="M3.500 13h7" stroke="#fff" stroke-width="1.300"/></svg><span class="m" style="left:21.500px"><svg class="mic" width="13" height="15" viewBox="0 0 13 15"><rect x="4" y="0" width="5" height="9.500" rx="2.500" fill="#fff"/><path d="M1.200 6.500v.8a5.300 5.300 0 0 0 10.600 0v-.8" stroke="#fff" stroke-width="1.500" fill="none"/><path d="M6.500 12.500v2" stroke="#fff" stroke-width="1.500"/></svg></span><span class="n" style="left:39px">陈晓琴的屏幕共享</span></div></div>
  <div class="tile" style="top:103px;border-color:#56585c"><div class="av"><svg width="50" height="50" viewBox="0 0 50 50"><rect width="26" height="50" fill="#e9a85c"/><rect x="26" width="24" height="50" fill="#d98c7e"/><circle cx="19" cy="27" r="6" fill="#e39444"/><path d="M30 24c4-2 9 0 12 3s2 7-2 7-5-2-8-3-4-5-2-7z" fill="#c25a4a" opacity=".85"/><circle cx="44" cy="25" r="2" fill="#b8483c"/><circle cx="34" cy="40" r="2.200" fill="#c86a58"/><path d="M23 50c0-7 2-11 6-12 3 1 4 6 3 12z" fill="#f2e0bc"/></svg></div><div class="lb" style="width:71px"><div class="abs" style="left:0;top:1px;width:20.500px;height:21px;background:#ff8a1e"><svg class="abs" style="left:3px;top:3.500px" width="15" height="15" viewBox="0 0 15 15"><circle cx="7.500" cy="4" r="3.300" fill="#fff"/><path d="M.8 14.500c0-5 3-6.500 6.700-6.500s6.700 1.500 6.700 6.500z" fill="#fff"/></svg></div><span class="m" style="left:27.500px"><svg class="mic" width="13" height="15" viewBox="0 0 13 15"><rect x="4" y="0" width="5" height="9.500" rx="2.500" fill="#fff"/><path d="M1.200 6.500v.8a5.300 5.300 0 0 0 10.600 0v-.8" stroke="#fff" stroke-width="1.500" fill="none"/><path d="M6.500 12.500v2" stroke="#fff" stroke-width="1.500"/></svg></span><span class="n" style="left:45px">阿拂</span></div></div>
  <div class="tile" style="top:213px;border-color:#56585c"><div class="av"><svg width="50" height="50" viewBox="0 0 50 50"><rect width="50" height="50" fill="#e3b397"/><rect y="15.500" width="50" height="1.800" fill="#efcdb6"/><rect y="0" width="50" height="15" fill="#e6b89c"/><path d="M1 50c0-14 4-22 13-25l6-3.500h6l6 3c8 3 12 11 13 25z" fill="#e9e8f3"/><path d="M15 22.500l5-2h6l4 2.500" stroke="#8a90a8" stroke-width=".7" fill="none"/><path d="M22 18h7v5h-7z" fill="#d9a88c"/><ellipse cx="21.500" cy="11" rx="9.500" ry="8.500" fill="#232228"/><path d="M14 14c1 4 3 6 5 6h5c3-1 5-3 6-8z" fill="#26252b"/><path d="M28 14c1 2 .5 5-.5 7" stroke="#e0b8a4" stroke-width="1.500" fill="none"/><path d="M16 33c4-1 8-1 11 0M18 35c3 3 1 6 3 8s4 0 5 2M21 38c-1 3-1 6 1 7M20 45c2 2 3 3 2 5" stroke="#d43a40" stroke-width="1.100" fill="none"/></svg></div><div class="lb" style="width:45px"><span class="m" style="left:4px"><svg class="mic" width="14" height="15" viewBox="0 0 14 15"><rect x="4.500" y="0" width="5" height="9.500" rx="2.500" fill="#e8e8e8"/><path d="M1.700 6.500v.8a5.300 5.300 0 0 0 10.600 0v-.8" stroke="#e8e8e8" stroke-width="1.400" fill="none"/><path d="M7 12.500v2" stroke="#e8e8e8" stroke-width="1.400"/><path d="M1 13.500l12-12.500" stroke="#ff4d4f" stroke-width="1.500"/></svg></span><span class="n" style="left:24px">SJL</span></div></div>
  <div class="tile" style="top:323px;border-color:#56585c"><div class="av"><svg width="50" height="50" viewBox="0 0 50 50"><defs><radialGradient id="dg" cx=".45" cy=".5" r=".6"><stop offset="0" stop-color="#e9c088"/><stop offset=".55" stop-color="#cf9246"/><stop offset="1" stop-color="#a8661e"/></radialGradient><filter id="bl"><feGaussianBlur stdDeviation="1.200"/></filter></defs><rect width="50" height="50" fill="url(#dg)"/><g filter="url(#bl)"><path d="M30 0h20v22c-4-10-12-16-24-18z" fill="#e8c9a0"/><path d="M28 50c2-8 10-12 22-16v16z" fill="#edd2ae"/><ellipse cx="24" cy="26" rx="11" ry="14" fill="#f0d4a4" transform="rotate(-25 24 26)"/><ellipse cx="8" cy="30" rx="7" ry="18" fill="#b87a2e"/><ellipse cx="40" cy="22" rx="9" ry="10" fill="#d99a48"/><ellipse cx="27" cy="33" rx="7" ry="5.500" fill="#e8aa1c" transform="rotate(30 27 33)"/></g><circle cx="30" cy="15.500" r="2" fill="#1c140c"/><circle cx="38" cy="24" r="2" fill="#1c140c"/><ellipse cx="29" cy="24.500" rx="2.600" ry="2" fill="#1c140c"/><circle cx="30.500" cy="15" r=".6" fill="#ddd"/><circle cx="38.500" cy="23.500" r=".6" fill="#ddd"/></svg></div><div class="lb" style="width:98px"><span class="m" style="left:4px"><svg class="mic" width="14" height="15" viewBox="0 0 14 15"><rect x="4.500" y="0" width="5" height="9.500" rx="2.500" fill="#e8e8e8"/><path d="M1.700 6.500v.8a5.300 5.300 0 0 0 10.600 0v-.8" stroke="#e8e8e8" stroke-width="1.400" fill="none"/><path d="M7 12.500v2" stroke="#e8e8e8" stroke-width="1.400"/><path d="M1 13.500l12-12.500" stroke="#ff4d4f" stroke-width="1.500"/></svg></span><span class="n" style="left:24px">高震-西南交大</span></div></div>
  <div class="tile" style="top:433px;border-color:#56585c"><div class="av"><svg width="50" height="50" viewBox="0 0 50 50"><rect width="50" height="50" fill="#fdfdfd"/><path d="M9 42c0-9 4-14 11-16l5-1 6 2c4 1 7 4 8 9l-5 8-14 2z" fill="#f4f2f4" stroke="#c8c4cc" stroke-width=".5"/><path d="M10 33c2-5 6-7 10-7l-6 9z" fill="#cfc6cc"/><path d="M19 8c0-8 12-9 13-1l.5 8c1 1 1.500 2 1 3l-1.500 1.500 1 3.500c-1 3-4 4-7 3.500l-2 3.500-4-4z" fill="#fbd82a"/><path d="M23 18c3-2.500 8-2.500 10 0 1.500 2 0 4-1.500 4.500l.5 2c-2 2.500-6 2.500-8.500-.5-1.500-2-1.500-4.500-.5-6z" fill="#cfa674"/><circle cx="25.500" cy="12.500" r="3.100" fill="#fff" stroke="#555" stroke-width=".5"/><circle cx="30.500" cy="13" r="2.700" fill="#fff" stroke="#555" stroke-width=".5"/><path d="M22 2c1-1.500 3-1.500 4 0M24 1.500c1-1.500 3-1.500 4 0" stroke="#666" stroke-width=".4" fill="none"/><path d="M8 41c1-5 5-7 9-5l8 3c2 1 2 4 0 5l-3 1-10-1c-3 0-5-1-4-3z" fill="#fbd82a" stroke="#b89a1a" stroke-width=".4"/><path d="M28 37c2-4 8-4 10 0l3 6-3 3z" fill="#fbd82a" stroke="#b89a1a" stroke-width=".4"/><rect x="28" y="39" width="9" height="8.500" rx="1.200" fill="#cfd6e2" stroke="#8a94a8" stroke-width=".5"/><path d="M30.500 40v6M32.500 40v6M34.500 40v6" stroke="#f0f2f6" stroke-width=".8"/><rect x="28.500" y="45" width="8" height="2" fill="#d8a848"/></svg></div><div class="lb" style="width:50px"><span class="m" style="left:4px"><svg class="mic" width="14" height="15" viewBox="0 0 14 15"><rect x="4.500" y="0" width="5" height="9.500" rx="2.500" fill="#e8e8e8"/><path d="M1.700 6.500v.8a5.300 5.300 0 0 0 10.600 0v-.8" stroke="#e8e8e8" stroke-width="1.400" fill="none"/><path d="M7 12.500v2" stroke="#e8e8e8" stroke-width="1.400"/><path d="M1 13.500l12-12.500" stroke="#ff4d4f" stroke-width="1.500"/></svg></span><span class="n" style="left:24px">韩洋</span></div></div>
  <div class="tile" style="top:543px;border-color:#56585c"><div class="av"><svg width="50" height="50" viewBox="0 0 50 50"><rect width="50" height="50" fill="#e9e7f0"/><rect y="21" width="50" height="2.500" fill="#5a8a8a"/><rect y="23" width="50" height="27" fill="#8a6648"/><path d="M0 14c4-4 9-3 12 1l5 8v27h-17z" fill="#a87a48"/><path d="M3 13c3-3 8-2 10 1l2 4c-4-1-8-1-12 0z" fill="#7a8458"/><path d="M17 22c0-9 16-9 16 0l2 22h-20z" fill="#3a2820"/><ellipse cx="25" cy="16" rx="5.500" ry="7" fill="#e6c6b6"/><path d="M17 9c1-7 16-8 18-1l-1 3.500c-5-2.500-11-2.500-17 0z" fill="#8c8892"/><path d="M17 10.500c5-2.500 12-2.500 17 0l1 1.500c-6-2-12-2-19 0z" fill="#6c6872"/><path d="M8 50c0-14 5-23 12-25l5 2 5-2c7 2 12 11 12 25z" fill="#dde4ee"/><path d="M9 23l2-5 1.500 1-1 5z" fill="#e6c6b6"/></svg></div><div class="chev" style="top:43px"><svg width="12" height="7" viewBox="0 0 12 7"><path d="M1 1l5 5 5-5" stroke="#fff" stroke-width="1.500" fill="none"/></svg></div></div>
  <div id="meter"><i></i></div>
</div>
<div id="handle"><div class="abs" style="left:6px;top:34px;width:4px;height:2px;background:#3f4144"></div><svg class="abs" style="left:4.500px;top:14px" width="8" height="12" viewBox="0 0 8 12"><path d="M1.500 1l5 5-5 5" stroke="#e4e6ea" stroke-width="1.300" fill="none"/></svg></div>
<div id="grip"></div>
<div id="speak"><svg class="abs" style="left:12.500px;top:11px" width="11" height="15" viewBox="0 0 11 15"><rect x="3" y="0" width="5" height="9" rx="2.500" fill="#8d8f93"/><path d="M.8 6v.8a4.700 4.700 0 0 0 9.400 0v-.8" stroke="#8d8f93" stroke-width="1.200" fill="none"/><path d="M5.500 11.500v2.500M3 14.300h5" stroke="#8d8f93" stroke-width="1.200"/></svg><div class="dv"></div><span>正在讲话: 陈晓琴;</span><svg class="abs" style="left:150px;top:5px" width="50" height="25" viewBox="150 5 50 25"><path d="M152 21l9.500-9.500 9.500 9.500-8.400 8.400h-2.200z" fill="#4d4f53"/><path d="M167 22l16-16 16 16-7.400 7.400h-17.200z" fill="#525458"/><path d="M167 22l4-4 3.500 3.500-7.900 7.900h-1z" fill="#47494d"/></svg></div>
<div id="bottomstrip"></div>
<div id="listbtn"><svg class="abs" style="left:4px;top:8px" width="17" height="15" viewBox="0 0 17 15"><g fill="#fff"><rect x="0" y="0" width="2" height="2"/><rect x="0" y="6.300" width="2" height="2"/><rect x="0" y="12.600" width="2" height="2"/><rect x="4" y="0" width="13" height="2"/><rect x="4" y="6.300" width="13" height="2"/><rect x="4" y="12.600" width="13" height="2"/></g></svg></div>
<svg id="ibeam" width="9" height="16" viewBox="0 0 9 16"><path d="M1 1.200h2.500c.7 0 1 .4 1 1v11.600c0 .6-.3 1-1 1h-2.500M8 1.200h-2.500c-.7 0-1 .4-1 1M8 14.800h-2.500c-.7 0-1-.4-1-1" stroke="#111" stroke-width="1.100" fill="none"/></svg>
</body>
</html>
